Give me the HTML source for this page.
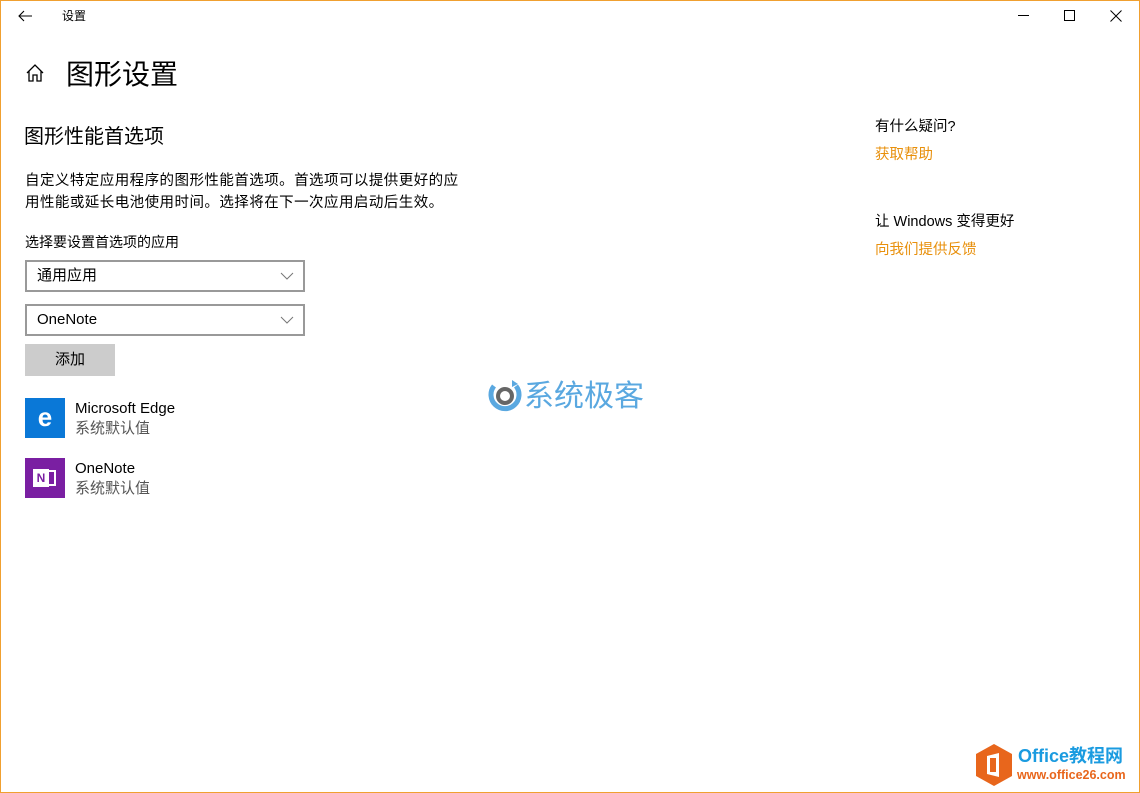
<!DOCTYPE html>
<html><head><meta charset="utf-8"><style>
*{margin:0;padding:0;box-sizing:border-box}
body{width:1140px;height:793px;background:#fff;font-family:"Liberation Sans","Noto Sans CJK SC",sans-serif;color:#000;position:relative;overflow:hidden}
.frame{position:absolute;left:0;top:0;width:1140px;height:793px;border:1px solid #f0a030;pointer-events:none}
.a{position:absolute;white-space:nowrap;line-height:1.2}
.dd{position:absolute;left:25px;width:280px;height:32px;border:2px solid #999;font-size:15px;padding:0 0 0 10px;line-height:28px}
.dd svg{position:absolute;right:9px;top:10px}
.link{color:#e8900c;font-size:14.5px}
</style></head><body>
<svg class="a" style="left:17px;top:9px" width="16" height="14" viewBox="0 0 16 14"><path d="M15 7H2M7 2L2 7l5 5" fill="none" stroke="#000" stroke-width="1.1"/></svg>
<div class="a" style="left:62px;top:9px;font-size:12px">设置</div>
<svg class="a" style="left:1018px;top:15px" width="12" height="2"><rect width="11" height="1" fill="#000"/></svg>
<svg class="a" style="left:1064px;top:10px" width="12" height="12"><rect x=".5" y=".5" width="10" height="10" fill="none" stroke="#000"/></svg>
<svg class="a" style="left:1110px;top:10px" width="12" height="12"><path d="M.5 .5l11 11M11.5 .5l-11 11" stroke="#000"/></svg>
<svg class="a" style="left:25px;top:63px" width="20" height="20" viewBox="0 0 20 20"><path d="M2 10L10 2l8 8M4 8v10h4v-6h4v6h4V8" fill="none" stroke="#000" stroke-width="1.3"/></svg>
<div class="a" style="left:66px;top:58px;font-size:28px">图形设置</div>
<div class="a" style="left:24px;top:125px;font-size:20px">图形性能首选项</div>
<div class="a" style="left:25px;top:170px;font-size:14.5px;line-height:22px;letter-spacing:0.45px">自定义特定应用程序的图形性能首选项。首选项可以提供更好的应<br>用性能或延长电池使用时间。选择将在下一次应用启动后生效。</div>
<div class="a" style="left:25px;top:234px;font-size:14px">选择要设置首选项的应用</div>
<div class="dd" style="top:260px">通用应用<svg width="14" height="8"><path d="M1 1l6 6 6-6" fill="none" stroke="#777"/></svg></div>
<div class="dd" style="top:304px">OneNote<svg width="14" height="8"><path d="M1 1l6 6 6-6" fill="none" stroke="#777"/></svg></div>
<div class="a" style="left:25px;top:344px;width:90px;height:32px;background:#ccc;font-size:15px;text-align:center;line-height:32px">添加</div>
<div class="a" style="left:25px;top:398px;width:40px;height:40px;background:#0a78d7;color:#fff;font-weight:bold;font-size:26px;text-align:center;line-height:38px">e</div>
<div class="a" style="left:75px;top:400px;font-size:15px">Microsoft Edge</div>
<div class="a" style="left:75px;top:420px;font-size:15px;color:#555">系统默认值</div>
<div class="a" style="left:25px;top:458px;width:40px;height:40px;background:#7a1fa2"><div style="position:absolute;left:8px;top:11px;width:16px;height:18px;background:#fff;color:#7a1fa2;font-weight:bold;font-size:12px;text-align:center;line-height:18px">N</div><div style="position:absolute;left:24px;top:12px;width:7px;height:16px;border:2px solid #fff;border-left:none"></div></div>
<div class="a" style="left:75px;top:460px;font-size:15px">OneNote</div>
<div class="a" style="left:75px;top:480px;font-size:15px;color:#555">系统默认值</div>
<svg class="a" style="left:486px;top:378px" width="38" height="36" viewBox="0 0 38 36"><path d="M8 8A14 14 0 1 0 30 8" fill="none" stroke="#5aa8e0" stroke-width="5"/><circle cx="19" cy="18" r="7" fill="none" stroke="#666" stroke-width="4"/><path d="M26 2l6 4-6 3z" fill="#5aa8e0"/></svg>
<div class="a" style="left:524px;top:379px;font-size:30px;color:#5aa8e0">系统极客</div>
<div class="a" style="left:875px;top:119px;font-size:14.5px">有什么疑问?</div>
<div class="a link" style="left:875px;top:147px">获取帮助</div>
<div class="a" style="left:875px;top:214px;font-size:14.5px">让 Windows 变得更好</div>
<div class="a link" style="left:875px;top:242px">向我们提供反馈</div>
<svg class="a" style="left:975px;top:743px" width="38" height="44" viewBox="0 0 38 44"><path d="M19 1l18 10v22L19 43 1 33V11z" fill="#e8661c"/><path d="M12 13l12-3v24l-12-3z" fill="#fff"/><rect x="15" y="15" width="6" height="14" fill="#e8661c"/></svg>
<div class="a" style="left:1018px;top:746px;font-size:18px;font-weight:bold;color:#1a9be0">Office教程网</div>
<div class="a" style="left:1017px;top:768px;font-size:12.5px;font-weight:bold;color:#e8661c">www.office26.com</div>
<div class="frame"></div>
</body></html>
